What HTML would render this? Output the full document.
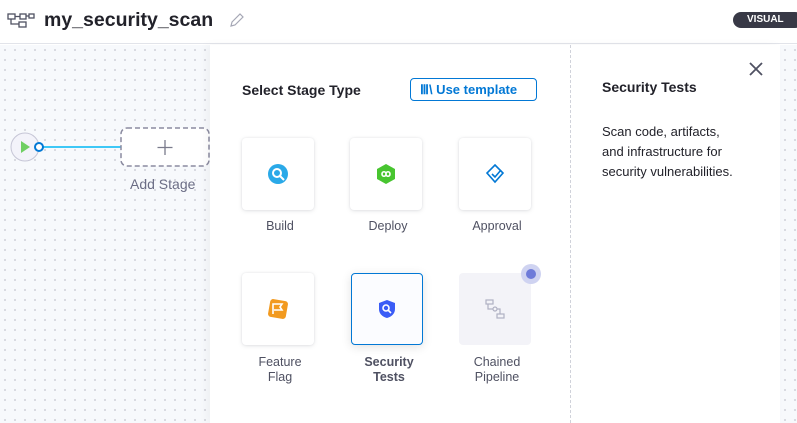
<!DOCTYPE html>
<html><head><meta charset="utf-8"><style>
*{box-sizing:border-box;margin:0;padding:0}
body{width:797px;height:423px;overflow:hidden;font-family:"Liberation Sans",sans-serif;background:#fff;position:relative}
.hdr{position:absolute;left:0;top:0;width:797px;height:44px;background:#fff;border-bottom:1px solid #e2e4ea}
.canvas{position:absolute;left:0;top:45px;width:797px;height:378px;background-color:#f7f9fc;background-image:radial-gradient(#c4c6cf 0.7px,transparent 1px);background-size:10px 10px}
.panel{position:absolute;left:210px;top:45px;width:570px;height:378px;background:#fff;box-shadow:-4px 0 8px rgba(0,0,0,.04)}
.div{position:absolute;left:570px;top:45px;height:378px;border-left:1px dashed #d0d2da}
.card{position:absolute;width:72px;height:72px;background:#fff;border-radius:4px;box-shadow:0 0 2px rgba(40,41,61,.08),0 1px 4px rgba(96,97,112,.16)}
.lbl{position:absolute;width:110px;text-align:center;font-size:12.5px;color:#4f5162;line-height:15px}
.ic{position:absolute;left:26px;top:26px}
</style></head><body>
<div class="hdr">
<svg style="position:absolute;left:7px;top:12px" width="28" height="16" viewBox="0 0 28 16" fill="none" stroke="#4f5162" stroke-width="1.3"><rect x="1" y="2" width="7" height="5"/><rect x="13" y="2" width="6" height="5"/><rect x="22" y="2" width="5" height="4"/><rect x="12" y="10" width="7" height="5"/><path d="M4 7v5h8M8 4.5h5M19 4h3"/></svg>
<div style="position:absolute;left:44px;top:9px;font-size:19.5px;font-weight:bold;color:#22222a">my_security_scan</div>
<svg style="position:absolute;left:229px;top:12px" width="16" height="16" viewBox="0 0 16 16" fill="none" stroke="#a5a7b5" stroke-width="1.2"><path d="M2 14l1-4 8-8 3 3-8 8z"/></svg>
<div style="position:absolute;left:733px;top:12px;width:70px;height:16px;border-radius:8px;background:#383946;color:#fff;font-size:10px;font-weight:bold;padding-left:14px;line-height:16px">VISUAL</div>
</div>
<div class="canvas"></div>
<svg style="position:absolute;left:0;top:120px" width="215" height="80">
<circle cx="25" cy="27" r="14" fill="#f3f3fa" stroke="#c6c6d6"/>
<path d="M21 21l9 6-9 6z" fill="#6fcf63"/>
<line x1="42" y1="27" x2="122" y2="27" stroke="#3dc7f6" stroke-width="2"/>
<circle cx="39" cy="27" r="4" fill="#fff" stroke="#0278d5" stroke-width="2"/>
<rect x="121" y="8" width="88" height="38" rx="6" fill="#fff" stroke="#8b8ba0" stroke-width="1.5" stroke-dasharray="5 3"/>
<path d="M165 20v15M157.5 27.5h15" stroke="#7a7b8c" stroke-width="1.3"/>
</svg>
<div style="position:absolute;left:130px;top:176px;font-size:14px;color:#6b6d85">Add Stage</div>
<div class="panel"></div>
<div class="div"></div>
<div style="position:absolute;left:242px;top:82px;font-size:14px;font-weight:bold;color:#22222a">Select Stage Type</div>
<div style="position:absolute;left:410px;top:78px;width:127px;height:23px;border:1px solid #0278d5;border-radius:4px;color:#0278d5;font-size:13px;font-weight:bold;line-height:21px;padding-left:9px">Ⅲ\ Use template</div>
<div style="position:absolute;left:602px;top:79px;font-size:14px;font-weight:bold;color:#22222a">Security Tests</div>
<div style="position:absolute;left:602px;top:122px;font-size:13px;color:#22222a;line-height:20px;width:170px;white-space:nowrap">Scan code, artifacts,<br>and infrastructure for<br>security vulnerabilities.</div>
<svg style="position:absolute;left:748px;top:61px" width="16" height="16" stroke="#4f5162" stroke-width="1.8"><path d="M2 2l12 12M14 2L2 14"/></svg>

<div class="card" style="left:242px;top:138px"><svg class="ic" width="20" height="20"><circle cx="10" cy="10" r="10" fill="#2aa9e8"/><circle cx="9" cy="9" r="4" fill="none" stroke="#fff" stroke-width="2"/><path d="M12 12l4 4" stroke="#fff" stroke-width="2"/></svg></div>
<div class="card" style="left:350px;top:138px"><svg class="ic" width="20" height="20"><path d="M10 0l9 5v10l-9 5-9-5V5z" fill="#48c530"/><path d="M6 10c0-3 4-3 4 0s4 3 4 0-4-3-4 0-4 3-4 0" fill="none" stroke="#fff" stroke-width="1.6"/></svg></div>
<div class="card" style="left:459px;top:138px"><svg class="ic" width="20" height="20"><path d="M10 1l8 8-8 9-8-9z" fill="none" stroke="#0278d5" stroke-width="1.6"/><path d="M7 10l3 3 6-7" fill="none" stroke="#0278d5" stroke-width="1.6"/></svg></div>
<div class="lbl" style="left:225px;top:219px">Build</div>
<div class="lbl" style="left:333px;top:219px">Deploy</div>
<div class="lbl" style="left:442px;top:219px">Approval</div>

<div class="card" style="left:242px;top:273px"><svg class="ic" width="20" height="20"><rect x="1" y="1" width="18" height="18" rx="3" fill="#f29a1f" transform="rotate(10 10 10)"/><path d="M5 15V5h9l-2 3 2 3H6" fill="none" stroke="#fff" stroke-width="1.6"/></svg></div>
<div class="card" style="left:351px;top:273px;border:1px solid #0278d5;background:#fbfcff;box-shadow:0 2px 10px rgba(0,0,0,.12)"><svg class="ic" width="20" height="20" style="left:25px;top:25px"><path d="M10 1l8 3v6c0 5-4 8-8 9-4-1-8-4-8-9V4z" fill="#3a5cf6"/><circle cx="9" cy="9" r="3" fill="none" stroke="#fff" stroke-width="1.6"/><path d="M11 11l3 3" stroke="#fff" stroke-width="1.6"/></svg></div>
<div class="card" style="left:459px;top:273px;background:#f3f3f8;box-shadow:none"><svg class="ic" width="20" height="20"><g fill="none" stroke="#b0b1c3" stroke-width="1.2"><rect x="1" y="1" width="7" height="4"/><rect x="12" y="15" width="7" height="4"/><circle cx="10" cy="10" r="2"/><path d="M3 5v5h5M12 10h3v5"/></g></svg></div>
<div style="position:absolute;left:521px;top:264px;width:20px;height:20px;border-radius:50%;background:#cfd3f1"><div style="margin:5px;width:10px;height:10px;border-radius:50%;background:#6e7bd9"></div></div>
<div class="lbl" style="left:225px;top:355px">Feature<br>Flag</div>
<div class="lbl" style="left:334px;top:355px;font-weight:bold">Security<br>Tests</div>
<div class="lbl" style="left:442px;top:355px">Chained<br>Pipeline</div>
</body></html>
